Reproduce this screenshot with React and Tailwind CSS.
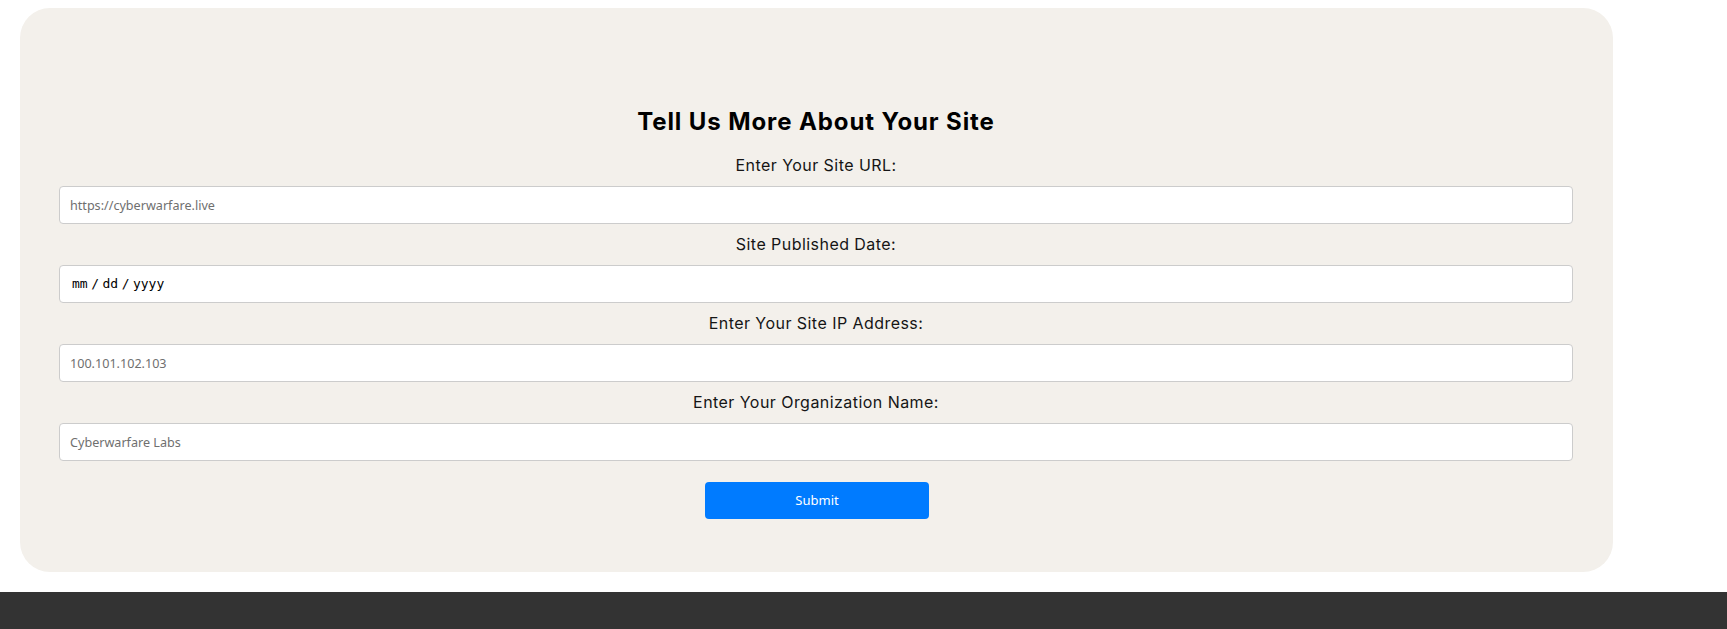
const labelFont = { fontFamily: 'Inter, "DejaVu Sans", sans-serif' };

const fields = [
  { id: 'url', label: 'Enter Your Site URL:', placeholder: 'https://cyberwarfare.live' },
  { id: 'date', label: 'Site Published Date:', date: true },
  { id: 'ip', label: 'Enter Your Site IP Address:', placeholder: '100.101.102.103' },
  { id: 'org', label: 'Enter Your Organization Name:', placeholder: 'Cyberwarfare Labs' },
];

// ─── Field ────────────────────────────────────────────────────────────────────

const Field = ({ field }) => (
  <div className="flex flex-col">
    <label
      htmlFor={field.id}
      className="h-[41px] flex items-center justify-center text-[16px] leading-[19px] tracking-[0.45px] text-[#151515] font-['Inter',sans-serif]"
    >
      {field.label}
    </label>
    {field.date ? (
      <div
        id={field.id}
        className="h-[38px] flex items-center gap-[3.5px] bg-white border border-[#cccccc] rounded-[4px] pl-[12px] text-[13px] text-black font-['DejaVu_Sans_Mono',monospace]"
      >
        <span>mm</span>
        <span>/</span>
        <span>dd</span>
        <span>/</span>
        <span>yyyy</span>
      </div>
    ) : (
      <input
        id={field.id}
        type="text"
        placeholder={field.placeholder}
        className="h-[38px] w-full bg-white border border-[#cccccc] rounded-[4px] px-[10px] text-[12.6px] text-black placeholder:text-[#6f6f6f] outline-none font-['Noto_Sans',sans-serif]"
      />
    )}
  </div>
);

// ─── App ──────────────────────────────────────────────────────────────────────

const App = () => (
  <div className="min-h-screen bg-white">
    <div className="pt-[8px] pl-[20px]">
      <form
        className="w-[1593px] rounded-[30px] bg-[#f3f0eb] pl-[39px] pr-[40px] pt-[99px] pb-[53px]"
        onSubmit={(e) => e.preventDefault()}
      >
        <h2
          className="h-[29px] leading-[29px] mb-[9px] text-center text-[24px] tracking-[0.9px] font-bold text-black"
          style={labelFont}
        >
          Tell Us More About Your Site
        </h2>
        {fields.map((f) => <Field key={f.id} field={f} />)}
        <div className="flex justify-center pt-[21px] pl-[2px]">
          <button
            type="submit"
            className="w-[224px] h-[37px] rounded-[4px] bg-[#007bff] text-white text-[13px] font-['Noto_Sans',sans-serif]"
          >
            Submit
          </button>
        </div>
      </form>
    </div>
    <footer className="mt-[20px] h-[140px] bg-[#333333]" />
  </div>
);

export default App;
